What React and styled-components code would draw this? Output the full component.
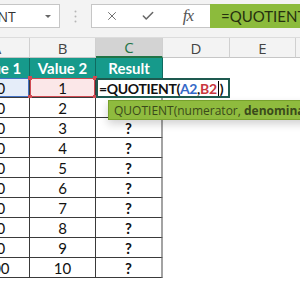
import React from "react";
import styled, { createGlobalStyle } from "styled-components";
import { X, Check } from "lucide-react";

const GlobalStyle = createGlobalStyle`
  html, body {
    margin: 0;
    padding: 0;
    background: #fff;
    overflow: hidden;
  }
  body {
    font-family: Lato, "Liberation Sans", sans-serif;
  }
`;

const Screen = styled.div`
  position: relative;
  width: 300px;
  height: 300px;
  overflow: hidden;
  background: #fff;
`;

const TopBar = styled.div`
  display: flex;
  align-items: flex-start;
  height: 38px;
  box-sizing: border-box;
  padding-top: 4px;
  background: #f3f3f3;
  border-bottom: 1px solid #dcdcdc;
`;

const NameBox = styled.div`
  display: flex;
  align-items: center;
  justify-content: space-between;
  flex: none;
  width: 120px;
  height: 24px;
  margin-left: -60px;
  padding: 0 8px 0 5px;
  box-sizing: border-box;
  background: #fff;
  border: 1px solid #c6c6c6;
  font: 14px "Open Sans", sans-serif;
  color: #333;
`;

const DropArrow = styled.span`
  width: 0;
  height: 0;
  border-left: 3px solid transparent;
  border-right: 3px solid transparent;
  border-top: 3px solid #666;
`;

const Grip = styled.svg`
  flex: none;
  margin: 6px 14px 0 14px;
`;

const FormulaBar = styled.div`
  display: flex;
  flex: 1;
  height: 24px;
  min-width: 0;
`;

const IconRow = styled.div`
  display: flex;
  align-items: center;
  flex: none;
  padding-left: 2px;
  background: #fff;
  border: 1px solid #c6c6c6;
  border-right: none;
  box-sizing: border-box;
`;

const IconButton = styled.div`
  display: flex;
  align-items: center;
  justify-content: center;
  width: ${(p) => p.$w}px;
  height: 100%;
  color: #666;
`;

const Fx = styled.span`
  font: italic 17px "Liberation Serif", serif;
  color: #555;
  letter-spacing: -1px;
`;

const FormulaInput = styled.div`
  flex: 1;
  display: flex;
  align-items: center;
  padding-left: 11px;
  background: #8cbb3c;
  font: 15px Lato, sans-serif;
  color: #26300f;
  white-space: nowrap;
  overflow: hidden;
`;

const Sheet = styled.div`
  display: grid;
  grid-template-columns: 66px 66px 67px 67px 66px 66px;
  grid-auto-rows: 20px;
  margin-left: -36px;
`;

const ColHead = styled.div`
  display: flex;
  align-items: center;
  justify-content: center;
  height: 20px;
  box-sizing: border-box;
  background: ${(p) => (p.$active ? "#d3d3d3" : "#f3f3f3")};
  border-right: 1px solid #d0d0d0;
  border-bottom: ${(p) => (p.$active ? "2px solid #217346" : "1px solid #c6c6c6")};
  font: 15px "Open Sans", sans-serif;
  color: ${(p) => (p.$active ? "#217346" : "#444")};
`;

const HeadCell = styled.div`
  display: flex;
  align-items: center;
  justify-content: center;
  box-sizing: border-box;
  background: #169a8b;
  border-right: 1px solid #0f6b60;
  font: bold 15px Lato, sans-serif;
  color: #fff;
`;

const tones = {
  blue: { bg: "#e5edf9", line: "#4472c4" },
  red: { bg: "#fbe7e8", line: "#d04a52" },
};

const Cell = styled.div`
  position: relative;
  display: flex;
  align-items: center;
  justify-content: center;
  box-sizing: border-box;
  background: ${(p) => (p.$tone ? tones[p.$tone].bg : "#fff")};
  border-right: ${(p) => (p.$last ? "2px solid #a3a3a3" : "1px solid #3a3a3a")};
  border-bottom: 1px solid #3a3a3a;
  box-shadow: ${(p) => (p.$tone ? `inset 0 0 0 1px ${tones[p.$tone].line}` : "none")};
  font: ${(p) => (p.$bold ? "bold" : "normal")} 15px Lato, sans-serif;
  color: #111;
`;

const Corner = styled.span`
  position: absolute;
  width: 4px;
  height: 4px;
  background: ${(p) => tones[p.$tone].line};
  ${(p) => (p.$top ? "top: -2px;" : "bottom: -2px;")}
  ${(p) => (p.$left ? "left: -2px;" : "right: -2px;")}
`;

const Blank = styled.div`
  background: #fff;
`;

const Editor = styled.div`
  grid-column: span 2;
  display: flex;
  align-items: center;
  padding-left: 1px;
  box-sizing: border-box;
  background: #fff;
  border: 2px solid #1e5a50;
  font: bold 14px Lato, sans-serif;
  letter-spacing: -0.35px;
  color: #111;
  white-space: nowrap;
  z-index: 1;
`;

const Ref = styled.span`
  color: ${(p) => (p.$tone === "blue" ? "#3569c8" : "#c8373f")};
`;

const Caret = styled.span`
  display: inline-block;
  width: 1px;
  height: 15px;
  background: #000;
  margin: 0 1px;
`;

const Tooltip = styled.div`
  position: absolute;
  left: 108px;
  top: 100px;
  height: 20px;
  display: flex;
  align-items: center;
  padding: 0 5px;
  box-sizing: border-box;
  background: #8fbb3e;
  border: 1px solid #77a12c;
  box-shadow: 0 4px 8px rgba(0, 0, 0, 0.18);
  font: 12px "Open Sans", sans-serif;
  color: #3a4a1b;
  white-space: nowrap;

  b {
    font-weight: 700;
  }
`;

const columns = ["A", "B", "C", "D", "E", "F"];
const rows = [2, 3, 4, 5, 6, 7, 8, 9, 10];

export default function App() {
  return (
    <Screen>
      <GlobalStyle />
      <TopBar>
        <NameBox>
          <span>QUOTIENT</span>
          <DropArrow />
        </NameBox>
        <Grip width="3" height="14" viewBox="0 0 3 14">
          <circle cx="1.5" cy="1.5" r="1" fill="#b5b5b5" />
          <circle cx="1.5" cy="6.5" r="1" fill="#b5b5b5" />
          <circle cx="1.5" cy="11.5" r="1" fill="#b5b5b5" />
        </Grip>
        <FormulaBar>
          <IconRow>
            <IconButton $w={36}>
              <X size={14} strokeWidth={1.6} />
            </IconButton>
            <IconButton $w={36}>
              <Check size={14} strokeWidth={2.6} />
            </IconButton>
            <IconButton $w={44}>
              <Fx>fx</Fx>
            </IconButton>
          </IconRow>
          <FormulaInput>=QUOTIENT(A2,B2)</FormulaInput>
        </FormulaBar>
      </TopBar>

      <Sheet>
        {columns.map((c) => (
          <ColHead key={c} $active={c === "C"}>
            {c}
          </ColHead>
        ))}

        <HeadCell>Value 1</HeadCell>
        <HeadCell>Value 2</HeadCell>
        <HeadCell>Result</HeadCell>
        <Blank />
        <Blank />
        <Blank />

        <Cell $tone="blue">10</Cell>
        <Cell $tone="red">
          1
          <Corner $tone="red" $top $left />
          <Corner $tone="red" $top />
          <Corner $tone="red" $left />
          <Corner $tone="red" />
        </Cell>
        <Editor>
          =QUOTIENT(<Ref $tone="blue">A2</Ref>,<Ref $tone="red">B2</Ref>
          <Caret />)
        </Editor>
        <Blank />
        <Blank />

        {rows.map((n) => (
          <React.Fragment key={n}>
            <Cell>{n * 10}</Cell>
            <Cell>{n}</Cell>
            <Cell $last $bold>
              ?
            </Cell>
            <Blank />
            <Blank />
            <Blank />
          </React.Fragment>
        ))}
      </Sheet>

      <Tooltip>
        QUOTIENT(numerator,&nbsp;<b>denominator</b>)
      </Tooltip>
    </Screen>
  );
}
